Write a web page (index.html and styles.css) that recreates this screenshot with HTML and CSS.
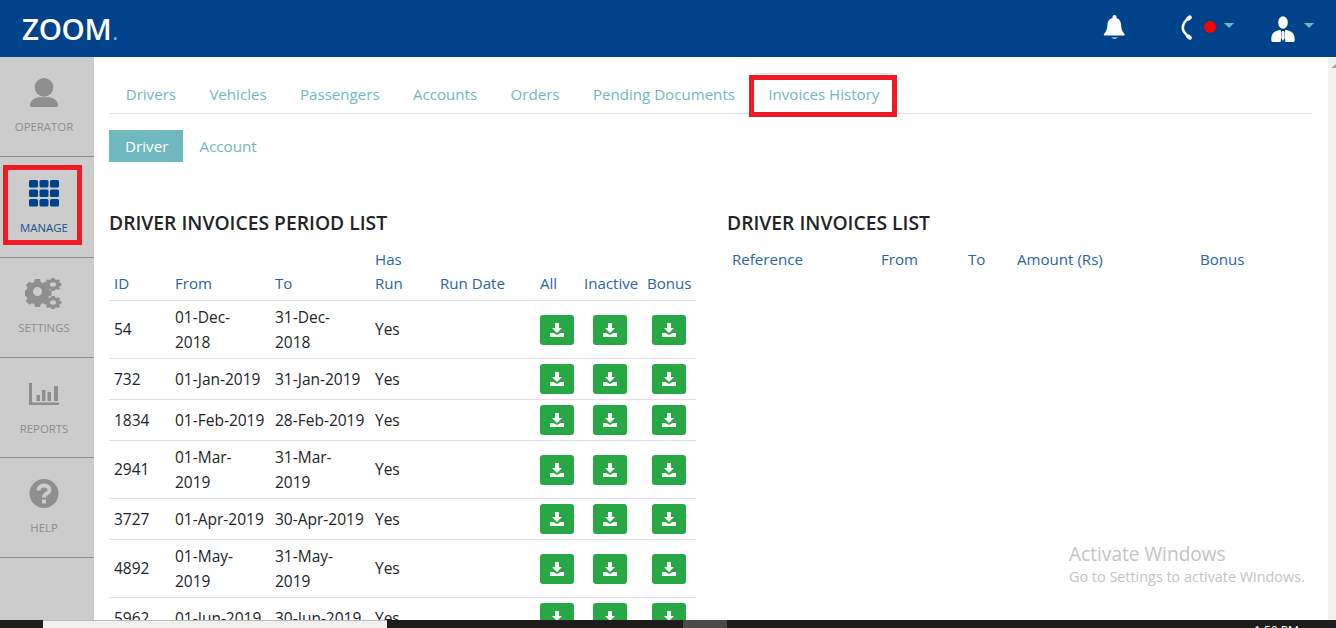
FILE: index.html
```html
<!DOCTYPE html>
<html lang="en">
<head>
<meta charset="utf-8">
<title>Zoom</title>
<link rel="stylesheet" href="styles.css">
</head>
<body>
<div class="app">
  <header class="topbar">
    <div class="logo">ZOOM<span class="logo-dot">.</span></div>
    <div class="top-icons">
      <svg class="bell" width="23" height="26" viewBox="0 0 23 26"><path fill="#fff" d="M11.500 1a2 2 0 0 1 2 2v1c3 .8 4.300 3.500 4.500 6.500.2 4 1 7 3.500 9.500.5.800.2 1.500-.8 1.500H1.800c-1 0-1.300-.7-.8-1.500C3.500 17.500 4.300 14.500 4.500 10.500 4.700 7.500 6 4.800 9.500 4V3a2 2 0 0 1 2-2z"/><path fill="#fff" d="M8.500 23.500h6c-.8 1.500-5.200 1.500-6 0z"/></svg>
      <div class="call">
        <svg width="11" height="25" viewBox="0 0 11 25"><path fill="none" stroke="#fff" stroke-width="2.600" d="M8.500 2.500C3.500 6 1.600 9.500 1.800 13c.2 3.500 2.800 6.500 6.700 9.500"/><path fill="none" stroke="#fff" stroke-width="4" stroke-linecap="round" d="M8.800 2.400 7.200 3.600M8.800 22.700 7.200 21.400"/></svg>
        <span class="dot"></span>
        <span class="caret"></span>
      </div>
      <div class="user">
        <svg width="24" height="26" viewBox="0 0 24 26"><ellipse cx="12" cy="6.500" rx="4.800" ry="6.200" fill="#fff"/><path fill="#fff" d="M2 26c-1.200 0-1.700-.8-1.700-2 0-4.500 1-7.500 5-9l4-1.200 1.200 2.200-.8 10zM22 26c1.200 0 1.700-.8 1.700-2 0-4.500-1-7.500-5-9l-4-1.200-1.200 2.200.8 10z"/><path fill="#fff" d="M11 15h2l.7 7-1.700 3-1.700-3z"/></svg>
        <span class="caret"></span>
      </div>
    </div>
  </header>
  <div class="body-row">
    <nav class="sidebar">
      <a class="side-item">
        <svg width="30" height="31" viewBox="0 0 32 31"><circle cx="16" cy="10" r="10" fill="#8f8f8f"/><path fill="#8f8f8f" d="M1 29c0-5 5-8 10-8.500h10c5 .5 10 3.500 10 8.500 0 1-1 2-2 2H3c-1 0-2-1-2-2z"/></svg>
        <span>OPERATOR</span>
      </a>
      <a class="side-item active">
        <svg width="30" height="27" viewBox="0 0 30 27"><g fill="#00438a"><rect width="9" height="7.500" rx="1.500"/><rect x="10.500" width="9" height="7.500" rx="1.500"/><rect x="21" width="9" height="7.500" rx="1.500"/><rect y="9.500" width="9" height="7.500" rx="1.500"/><rect x="10.500" y="9.500" width="9" height="7.500" rx="1.500"/><rect x="21" y="9.500" width="9" height="7.500" rx="1.500"/><rect y="19" width="9" height="7.500" rx="1.500"/><rect x="10.500" y="19" width="9" height="7.500" rx="1.500"/><rect x="21" y="19" width="9" height="7.500" rx="1.500"/></g></svg>
        <span>MANAGE</span>
        <span class="highlight-box side-box"></span>
      </a>
      <a class="side-item">
        <svg width="38" height="31" viewBox="0 0 38 31"><g fill="#8f8f8f"><path fill-rule="evenodd" d="M10 4h5l.8 3 2.200 1 2.700-1.600 3.500 3.500-1.600 2.700.9 2.200 3 .8v5l-3 .8-.9 2.200 1.600 2.700-3.500 3.500-2.700-1.600-2.200.9-.8 3h-5l-.8-3-2.200-.9-2.700 1.600-3.500-3.500 1.600-2.700-.9-2.200-3-.8v-5l3-.8.9-2.200-1.600-2.700 3.500-3.500 2.700 1.600 2.200-1zM12.500 12a4.500 4.500 0 1 0 0 9 4.500 4.500 0 0 0 0-9z" transform="translate(0 -3)"/><path fill-rule="evenodd" d="M29 0h3l.5 1.800 1.500.7 1.700-1 2 2-1 1.700.7 1.500 1.600.5v3l-1.600.5-.7 1.500 1 1.700-2 2-1.700-1-1.500.7-.5 1.800h-3l-.5-1.800-1.500-.7-1.700 1-2-2 1-1.700-.7-1.500-1.600-.5v-3l1.600-.5.7-1.500-1-1.700 2-2 1.700 1 1.500-.7zM30.500 5.500a3 3 0 1 0 0 6 3 3 0 0 0 0-6z" transform="translate(-2.500 0) scale(1 .75)"/><path fill-rule="evenodd" d="M29 0h3l.5 1.800 1.500.7 1.700-1 2 2-1 1.700.7 1.500 1.600.5v3l-1.600.5-.7 1.500 1 1.700-2 2-1.700-1-1.500.7-.5 1.800h-3l-.5-1.800-1.500-.7-1.700 1-2-2 1-1.700-.7-1.500-1.600-.5v-3l1.600-.5.7-1.500-1-1.700 2-2 1.700 1 1.500-.7zM30.500 5.500a3 3 0 1 0 0 6 3 3 0 0 0 0-6z" transform="translate(-2.500 18) scale(1 .75)"/></g></svg>
        <span>SETTINGS</span>
      </a>
      <a class="side-item reports">
        <svg width="30" height="22" viewBox="0 0 30 22"><g fill="#8f8f8f"><path d="M0 0h3v19.500h27V22H0z"/><rect x="7.500" y="12" width="3.500" height="6"/><rect x="13" y="7" width="3.500" height="11"/><rect x="18.500" y="9" width="3.500" height="9"/><rect x="25" y="3" width="4" height="15"/></g></svg>
        <span>REPORTS</span>
      </a>
      <a class="side-item">
        <svg width="30" height="30" viewBox="0 0 30 30"><circle cx="15" cy="15" r="14.500" fill="#8f8f8f"/><path fill="none" stroke="#ccc" stroke-width="4" d="M9.500 12c0-3 2.300-5 5.500-5s5.500 2 5.500 4.500c0 3.500-5.500 3.500-5.500 7.500"/><rect x="13" y="21" width="4" height="4" rx=".5" fill="#ccc"/></svg>
        <span>HELP</span>
      </a>
    </nav>
    <main class="content">
      <ul class="tabs">
        <li>Drivers</li>
        <li>Vehicles</li>
        <li>Passengers</li>
        <li>Accounts</li>
        <li>Orders</li>
        <li>Pending Documents</li>
        <li class="tab-marked">Invoices History<span class="highlight-box tab-box"></span></li>
      </ul>
      <div class="pills">
        <span class="pill on">Driver</span>
        <span class="pill">Account</span>
      </div>
      <div class="columns">
        <section class="col-left">
          <h2>DRIVER INVOICES PERIOD LIST</h2>
          <table class="grid">
            <colgroup><col class="c-id"><col class="c-date"><col class="c-date"><col class="c-run"><col class="c-date"><col class="c-all"><col class="c-ina"><col class="c-bon"></colgroup>
            <thead>
              <tr><th>ID</th><th>From</th><th>To</th><th>Has Run</th><th>Run Date</th><th>All</th><th>Inactive</th><th>Bonus</th></tr>
            </thead>
            <tbody id="rows"></tbody>
          </table>
        </section>
        <section class="col-right">
          <h2>DRIVER INVOICES LIST</h2>
          <div class="list-head">
            <span class="lh-ref">Reference</span>
            <span class="lh-from">From</span>
            <span class="lh-to">To</span>
            <span class="lh-amt">Amount (Rs)</span>
            <span>Bonus</span>
          </div>
        </section>
      </div>
      <div class="watermark">
        <div class="wm-title">Activate Windows</div>
        <div class="wm-sub">Go to Settings to activate Windows.</div>
      </div>
    </main>
    <div class="scrollbar"><svg width="8" height="14" viewBox="0 0 8 14"><path d="M8 7v4H3.500z" fill="#a3a3a3"/></svg></div>
  </div>
  <footer class="taskbar">
    <span class="tb-start"></span>
    <span class="tb-search"></span>
    <span class="tb-fill"></span>
    <span class="tb-app"></span>
    <span class="tb-fill2"></span>
    <span class="tb-time">1:50 PM</span>
  </footer>
</div>
<script src="app.js"></script>
</body>
</html>
```
FILE: styles.css
```css
* { box-sizing: border-box; }
html, body { margin: 0; height: 100%; overflow: hidden; }
body { font-family: "Open Sans", "Liberation Sans", sans-serif; font-size: 14px; color: #212529; background: #fff; }
.app { height: 628px; display: flex; flex-direction: column; }
.topbar { height: 57px; flex: none; background: #00438a; display: flex; align-items: center; justify-content: space-between; }
.logo { margin-left: 22px; font-size: 29.5px; font-weight: 600; color: #fff; letter-spacing: -.3px; line-height: 1; font-family: "Open Sans", sans-serif; }
.logo-dot { color: #6fb9be; font-size: 20px; margin-left: 1px; }
.top-icons { display: flex; align-items: center; }
.bell { margin-right: 55px; margin-top: -3px; }
.call { display: flex; align-items: center; width: 90px; margin-top: -3px; }
.dot { width: 12px; height: 12px; border-radius: 50%; background: #f00; margin-left: 12px; }
.caret { width: 0; height: 0; border-left: 5px solid transparent; border-right: 5px solid transparent; border-top: 5px solid #6fb9be; margin-left: 8px; margin-top: -4px; }
.user { display: flex; align-items: center; width: 65px; margin-top: 1px; }
.user .caret { margin-left: 9px; margin-top: -8px; }
.body-row { flex: 1; min-height: 0; display: flex; }
.sidebar { width: 94px; flex: none; background: #ccc; }
.side-item { position: relative; height: 100.3px; display: flex; flex-direction: column; align-items: center; border-bottom: 1px solid #8e8e8e; font-size: 11.4px; color: #8f8f8f; padding: 20px 6px 0 0; }
.side-item svg { height: 31px; flex: none; }
.side-item span { margin-top: 10px; line-height: 17px; }
.side-item.active { color: #1f4f8f; }
.side-item.active svg { height: 27px; margin-top: 3px; }
.side-item.active span { margin-top: 12px; }
.side-item.reports svg { height: 22px; margin-top: 5px; }
.side-item.reports span { margin-top: 15px; }
.highlight-box { position: absolute; border: 5px solid #ed1c24; margin: 0 !important; }
.side-box { left: 3px; top: 8px; width: 79px; height: 80px; }
.content { position: relative; flex: 1; min-width: 0; padding: 18px 16px 0 15px; overflow: hidden; }
.tabs { list-style: none; margin: 0; padding: 0; display: flex; border-bottom: 1px solid #dee2e6; height: 39px; font-size: 15.1px; color: #6fb9be; }
.tabs li { position: relative; padding: 7px 16.7px 0; line-height: 24px; }
.tab-marked::before { content: ""; position: absolute; left: 1px; right: 1px; top: -2px; height: 6px; border: 1px solid #dee2e6; border-bottom: 0; border-radius: 4px 4px 0 0; }
.tab-box { left: -3px; top: 0; width: 148px; height: 42px; }
.pills { display: flex; margin-top: 16px; font-size: 15.2px; }
.pill { padding: 0 16px; height: 32px; line-height: 32px; color: #6fb9be; }
.pill.on { background: #6fb9be; color: #fff; padding: 0 15px 0 16px; }
.columns { display: flex; gap: 31px; margin-top: 49px; }
.col-left { width: 587px; flex: none; }
.col-right { flex: 1; min-width: 0; }
h2 { margin: 0 0 12px; font-size: 19.3px; font-weight: 600; line-height: 24px; color: #212529; }
.grid { width: 587px; table-layout: fixed; border-collapse: collapse; font-size: 15.5px; line-height: 24.5px; }
.c-id { width: 61px; }
.c-date { width: 100px; }
.c-run { width: 65px; }
.c-all { width: 44px; }
.c-ina { width: 63px; }
.c-bon { width: 54px; }
.grid th { font-weight: 400; font-size: 15.1px; line-height: 24px; text-align: left; color: #2c659f; padding: 0 5px 5px; vertical-align: bottom; border-bottom: 1px solid #dee2e6; white-space: normal; }
.grid th:nth-child(n+6) { padding-right: 0; white-space: nowrap; }
.grid td { padding: 4px 5px; border-bottom: 1px solid #dee2e6; color: #212529; vertical-align: middle; }
.grid td.act { padding: 5px 0; }
.grid td.act:nth-child(7) { padding-right: 1px; }
.dl { display: flex; width: 34px; height: 30px; margin: 0 auto; align-items: center; justify-content: center; background: #28a745; border-radius: 3px; }
.list-head { display: flex; padding: 0 5px; line-height: 24px; color: #2c659f; font-size: 15.1px; }
.lh-ref { width: 149px; }
.lh-from { width: 87px; }
.lh-to { width: 49px; }
.lh-amt { width: 183px; }
.watermark { position: absolute; left: 975px; top: 485px; color: #c4c4c4; white-space: nowrap; }
.wm-title { font-size: 19.1px; line-height: 24px; }
.wm-sub { font-size: 14.4px; line-height: 22px; }
.scrollbar { width: 8px; flex: none; background: #f1f1f1; }
.scrollbar svg { display: block; }
.taskbar { position: relative; height: 8px; flex: none; background: #1d1d1d; display: flex; overflow: hidden; }
.tb-start { width: 43px; }
.tb-search { width: 344px; background: #f0f0f0; border-top: 1px solid #bbb; }
.tb-fill { width: 296px; }
.tb-app { width: 44px; background: #4a4a4a; }
.tb-fill2 { flex: 1; }
.tb-time { position: absolute; left: 1254px; top: 5px; color: #fff; font-size: 12px; line-height: 12px; }
```
FILE: app.js
```js
var rows = [
  ["54", "01-Dec-2018", "31-Dec-2018"],
  ["732", "01-Jan-2019", "31-Jan-2019"],
  ["1834", "01-Feb-2019", "28-Feb-2019"],
  ["2941", "01-Mar-2019", "31-Mar-2019"],
  ["3727", "01-Apr-2019", "30-Apr-2019"],
  ["4892", "01-May-2019", "31-May-2019"],
  ["5962", "01-Jun-2019", "30-Jun-2019"]
];
var icon = '<svg width="14" height="14" viewBox="0 0 14 14"><path fill="#fff" d="M5 0h4v5h3L7 10 2 5h3z"/><path fill="#fff" d="M0 10h3.500L7 12l3.500-2H14v4H0z"/></svg>';
var btn = '<td class="act"><span class="dl">' + icon + '</span></td>';
document.getElementById("rows").innerHTML = rows.map(function (r) {
  return "<tr><td>" + r[0] + "</td><td>" + r[1] + "</td><td>" + r[2] + "</td><td>Yes</td><td></td>" + btn + btn + btn + "</tr>";
}).join("");
```
